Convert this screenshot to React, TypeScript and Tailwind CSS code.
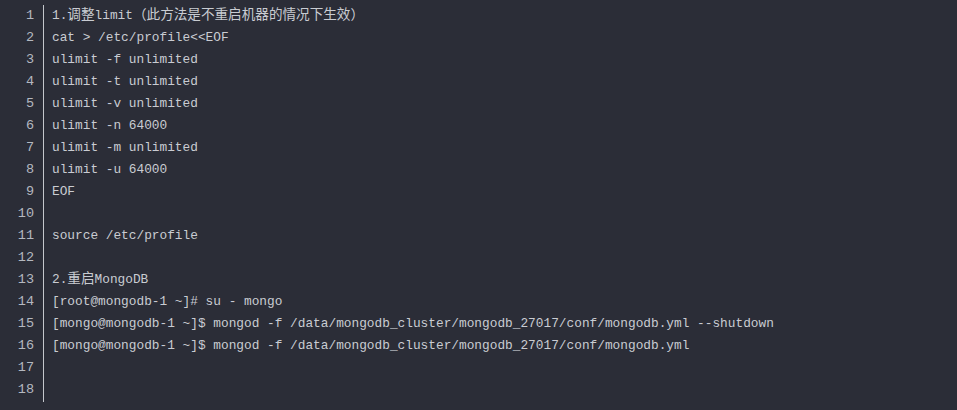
const LINES = [
  "1.调整limit（此方法是不重启机器的情况下生效）",
  "cat > /etc/profile<<EOF",
  "ulimit -f unlimited",
  "ulimit -t unlimited",
  "ulimit -v unlimited",
  "ulimit -n 64000",
  "ulimit -m unlimited",
  "ulimit -u 64000",
  "EOF",
  "",
  "source /etc/profile",
  "",
  "2.重启MongoDB",
  "[root@mongodb-1 ~]# su - mongo",
  "[mongo@mongodb-1 ~]$ mongod -f /data/mongodb_cluster/mongodb_27017/conf/mongodb.yml --shutdown",
  "[mongo@mongodb-1 ~]$ mongod -f /data/mongodb_cluster/mongodb_27017/conf/mongodb.yml",
  "",
  "",
];

// CJK runs render a bit wider than the mono text in the original
function CodeLine({ text }: { text: string }) {
  const parts = text.split(/([\u3000-\u9fff\uff00-\uffef]+)/);
  return (
    <>
      {parts.map((p, i) =>
        i % 2 === 1 ? (
          <span key={i} className="text-[13.6px]">{p}</span>
        ) : (
          <span key={i}>{p}</span>
        )
      )}
    </>
  );
}

export default function App() {
  return (
    <div className="w-[957px] h-[410px] bg-[#2b2d37] overflow-hidden font-['Liberation_Mono','Noto_Sans_CJK_SC',monospace] text-[12.8px]">
      <div className="flex pt-[5px]">
        <div className="w-[43px] pr-[9px] flex flex-col items-end text-[#b4b8c0] text-[13.5px]">
          {LINES.map((_, i) => (
            <div key={i} className="h-[22px] leading-[22px]">
              {i + 1}
            </div>
          ))}
        </div>
        <div className="border-l border-[#c4c7cc] pl-[8px] pb-[1px] flex flex-col text-[#c9ccd2]">
          {LINES.map((line, i) => (
            <div key={i} className="h-[22px] leading-[22px] whitespace-pre">
              <CodeLine text={line} />
            </div>
          ))}
        </div>
      </div>
    </div>
  );
}
